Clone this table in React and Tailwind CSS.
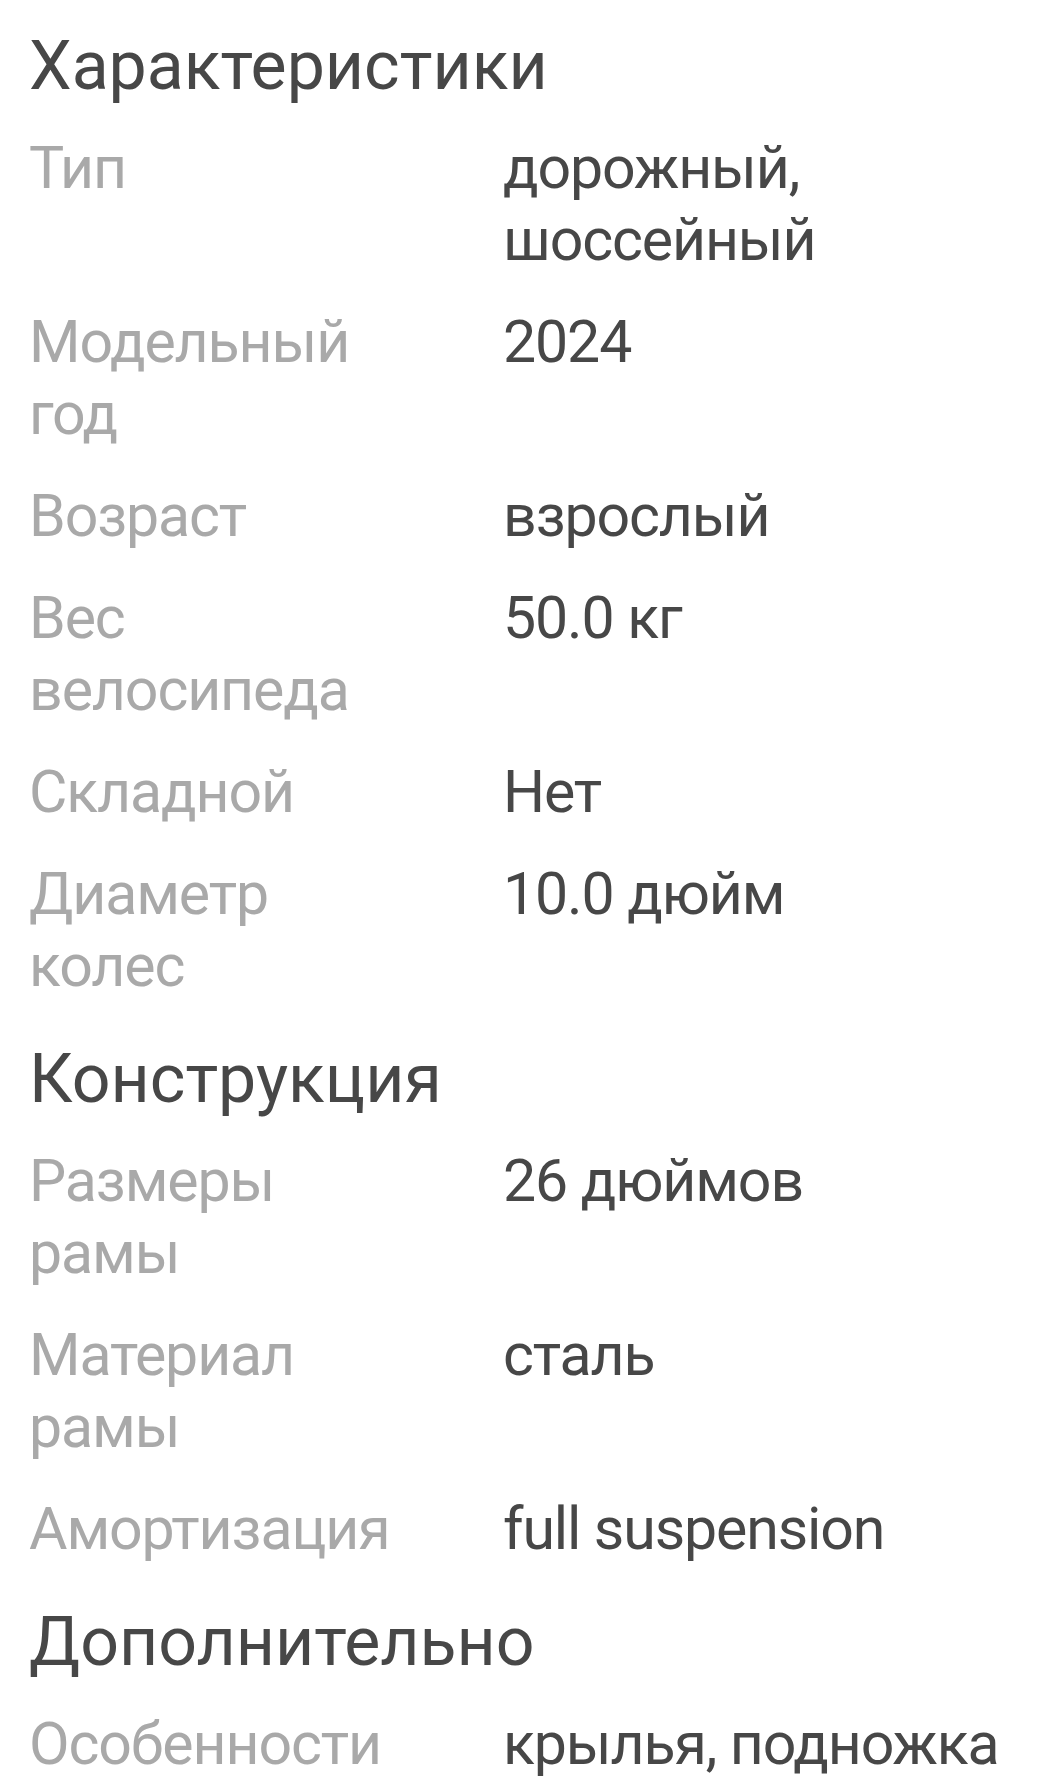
import React from 'react';

const sections = [
  {
    title: 'Характеристики',
    rows: [
      ['Тип', 'дорожный, шоссейный'],
      ['Модельный год', '2024'],
      ['Возраст', 'взрослый'],
      ['Вес велосипеда', '50.0 кг'],
      ['Складной', 'Нет'],
      ['Диаметр колес', '10.0 дюйм'],
    ],
  },
  {
    title: 'Конструкция',
    rows: [
      ['Размеры рамы', '26 дюймов'],
      ['Материал рамы', 'сталь'],
      ['Амортизация', 'full suspension'],
    ],
  },
  {
    title: 'Дополнительно',
    rows: [['Особенности', 'крылья, подножка']],
  },
];

const SpecRow = ({ label, value }) => (
  <div className="flex py-[15px]">
    <div className="w-[474px] shrink-0 pr-[80px] text-[#a9a9a9]">{label}</div>
    <div className="flex-1 text-[#474747]">{value}</div>
  </div>
);

export default function App() {
  return (
    <div
      className="min-h-screen bg-white px-[29px] pt-[4px] text-[59px] leading-[72px] tracking-[-1.1px]"
      style={{ fontFamily: 'Roboto, "Noto Sans", sans-serif' }}
    >
      {sections.map((section) => (
        <div key={section.title}>
          <h2 className="pt-[20px] pb-[9px] text-[68px] leading-[84px] tracking-normal text-[#474747]">
            {section.title}
          </h2>
          {section.rows.map(([label, value]) => (
            <SpecRow key={label} label={label} value={value} />
          ))}
        </div>
      ))}
    </div>
  );
}
